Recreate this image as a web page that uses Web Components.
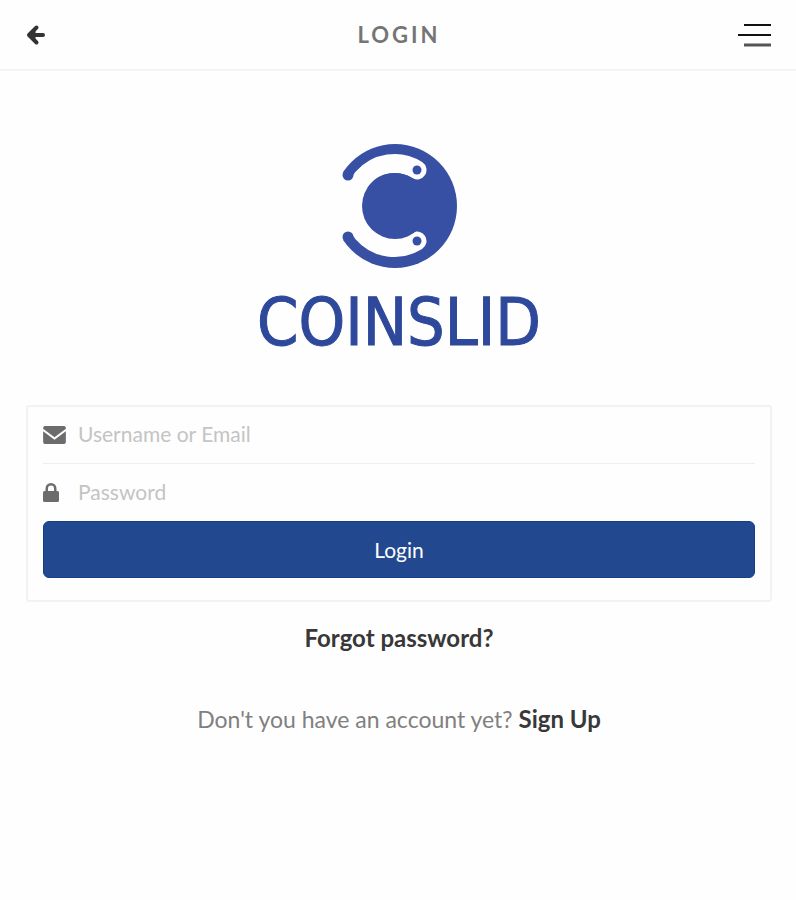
<!DOCTYPE html>
<html lang="en">
<head>
	<meta charset="utf-8">
	<meta name="viewport" content="width=device-width, initial-scale=1">
	<title>Login</title>
	<style>
		body {
			margin: 0;
			background: #fefefe;
			color: #808080;
			font-family: Lato, "Noto Sans", sans-serif;
			font-size: 23px;
			line-height: 28px;
		}
	</style>
</head>
<body>
	<cs-login-page></cs-login-page>

	<script>
		class TopBar extends HTMLElement {
			constructor() {
				super();
				this.attachShadow({ mode: "open" });
				this.shadowRoot.innerHTML = `
					<style>
						:host {
							display: block;
							border-bottom: 2px solid #f4f4f4;
						}

						header {
							display: grid;
							grid-template-columns: 1fr auto 1fr;
							align-items: center;
							height: 69px;
							padding: 0 24px 0 26px;
						}

						h1 {
							margin: 0;
							color: #757575;
							font-size: 22px;
							font-weight: 700;
							letter-spacing: 3px;
						}

						button {
							display: flex;
							padding: 0;
							border: 0;
							background: none;
							color: #333;
							cursor: pointer;
						}

						#menu {
							justify-self: end;
						}
					</style>

					<header>
						<button id="back" type="button" aria-label="Back">
							<svg width="20" height="22" viewBox="0 0 20 22" fill="none" stroke="currentColor" stroke-width="4" stroke-linecap="round" stroke-linejoin="round">
								<path d="M10.500 3.500 3 11l7.500 7.500M4 11h13"/>
								<path d="M4 11l5-4v8z" fill="currentColor" stroke-width="1"/>
							</svg>
						</button>
						<h1><slot></slot></h1>
						<button id="menu" type="button" aria-label="Menu">
							<svg width="35" height="24" viewBox="0 0 35 24" fill="none" stroke-width="2">
								<path d="M7 2h27M1 12h33" stroke="#111"/>
								<path d="M7 22h27" stroke="#555" stroke-width="3"/>
							</svg>
						</button>
					</header>
				`;
			}
		}

		class BrandLogo extends HTMLElement {
			constructor() {
				super();
				this.attachShadow({ mode: "open" });
				this.shadowRoot.innerHTML = `
					<style>
						:host {
							display: flex;
							flex-direction: column;
							align-items: center;
							color: #3850a4;
						}

						span {
							margin-top: 19px;
							color: #2e489b;
							font-family: "Liberation Sans Narrow", "DejaVu Sans Condensed", "DejaVu Sans", sans-serif;
							font-size: 66px;
							line-height: 72px;
							-webkit-text-stroke: 1px currentColor;
						}
					</style>

					<svg width="132" height="124" viewBox="-62 -62 132 124" fill="currentColor" aria-hidden="true">
						<circle r="62"/>
						<path d="M0 0-94-62V62z" fill="#fefefe"/>
						<path d="M22-36A42 42 0 1 0 22 35" fill="none" stroke="#fefefe" stroke-width="19" stroke-linecap="round"/>
						<circle r="33"/>
						<circle cx="-47" cy="-31" r="5.500"/>
						<circle cx="-47" cy="31" r="5.500"/>
						<circle cx="22" cy="-36" r="4.500"/>
						<circle cx="22" cy="35" r="4.500"/>
					</svg>
					<span><slot></slot></span>
				`;
			}
		}

		const fieldIcons = {
			envelope: `
				<svg width="23" height="18" viewBox="0 0 24 19" fill="currentColor">
					<path d="M2 0h20a2 2 0 0 1 2 2v1L12 12 0 3V2a2 2 0 0 1 2-2z"/>
					<path d="M0 5.500 12 14.500 24 5.500V17a2 2 0 0 1-2 2H2a2 2 0 0 1-2-2z"/>
				</svg>`,
			lock: `
				<svg width="16" height="19" viewBox="0 0 16 19" fill="currentColor">
					<path d="M1.500 8H2.500V5.500a5.500 5.500 0 0 1 11 0V8h1A1.500 1.500 0 0 1 16 9.500v8a1.500 1.500 0 0 1-1.500 1.500h-13A1.500 1.500 0 0 1 0 17.500v-8A1.500 1.500 0 0 1 1.500 8zM5 8h6V5.500a3 3 0 0 0-6 0z"/>
				</svg>`,
		};

		class IconField extends HTMLElement {
			constructor() {
				super();
				this.attachShadow({ mode: "open" });
				const label = this.getAttribute("label");
				this.shadowRoot.innerHTML = `
					<style>
						:host {
							display: flex;
							align-items: center;
							height: 57px;
							color: #6c6c6c;
						}

						label {
							display: flex;
							width: 35px;
						}

						input {
							flex: 1;
							min-width: 0;
							padding: 0 0 2px;
							border: 0;
							outline: 0;
							background: none;
							color: #333;
							font: inherit;
							font-size: 21px;
						}

						input::placeholder {
							color: #c4c4c4;
							opacity: 1;
						}
					</style>

					<label for="field" aria-label="${label}">${fieldIcons[this.getAttribute("icon")]}</label>
					<input id="field" type="${this.getAttribute("type")}" placeholder="${label}">
				`;
			}
		}

		class LoginPage extends HTMLElement {
			constructor() {
				super();
				this.attachShadow({ mode: "open" });
				this.shadowRoot.innerHTML = `
					<style>
						:host {
							display: block;
						}

						main {
							padding: 73px 24px 40px 26px;
							text-align: center;
						}

						form {
							margin-top: 46px;
							padding: 0 15px 22px;
							border: 2px solid #f2f2f2;
							border-radius: 3px;
						}

						#user {
							box-sizing: border-box;
							border-bottom: 1px solid #eee;
						}

						form button {
							display: block;
							width: 100%;
							height: 57px;
							border: 1px solid #153f88;
							border-radius: 6px;
							background: #22488f;
							color: #fff;
							font: inherit;
							font-size: 21px;
							cursor: pointer;
						}

						a {
							color: #383838;
							font-size: 24px;
							font-weight: 700;
							text-decoration: none;
						}

						p {
							margin: 22px 0 0;
						}

						p + p {
							margin-top: 53px;
						}
					</style>

					<cs-top-bar>LOGIN</cs-top-bar>
					<main>
						<cs-brand-logo>COINSLID</cs-brand-logo>
						<form>
							<cs-icon-field id="user" icon="envelope" type="text" label="Username or Email"></cs-icon-field>
							<cs-icon-field id="password" icon="lock" type="password" label="Password"></cs-icon-field>
							<button type="submit">Login</button>
						</form>
						<p><a href="#forgot">Forgot password?</a></p>
						<p>Don't you have an account yet? <a href="#signup">Sign Up</a></p>
					</main>
				`;

				const form = this.shadowRoot.querySelector("form");
				form.addEventListener("submit", (ev) => ev.preventDefault());
			}
		}

		customElements.define("cs-top-bar", TopBar);
		customElements.define("cs-brand-logo", BrandLogo);
		customElements.define("cs-icon-field", IconField);
		customElements.define("cs-login-page", LoginPage);
	</script>
</body>
</html>
